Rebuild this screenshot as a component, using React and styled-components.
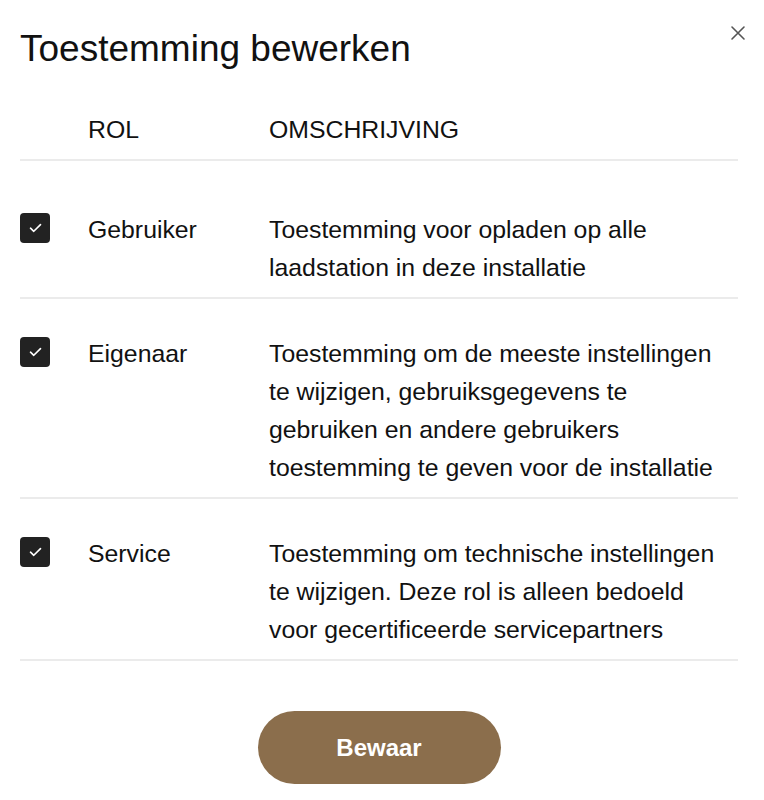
import React from 'react'
import styled, { createGlobalStyle } from 'styled-components'

const GlobalStyle = createGlobalStyle`
  body {
    margin: 0;
    background: #fff;
    font-family: "Liberation Sans", Arial, sans-serif;
    color: #111;
  }
`

const Dialog = styled.div`
  position: relative;
  padding: 27px 26px 0 20px;
`

const Title = styled.h2`
  margin: 0;
  font-size: 37px;
  line-height: 44px;
  font-weight: 400;
`

const CloseButton = styled.button`
  position: absolute;
  top: 24px;
  right: 17px;
  width: 18px;
  height: 18px;
  padding: 0;
  border: 0;
  background: none;
  cursor: pointer;
  svg {
    display: block;
  }
`

const Table = styled.div`
  margin-top: 40px;
`

const Row = styled.div`
  display: grid;
  grid-template-columns: 68px 181px 1fr;
  align-items: start;
  font-size: 24.8px;
  line-height: 38px;
  padding: ${(p) => (p.header ? '0 0 10px' : p.first ? '50px 0 10px' : '36px 0 10px')};
  border-bottom: 2px solid #ebebeb;
`

const Description = styled.span`
  max-width: 452px;
`

const Check = styled.span`
  width: 30px;
  height: 30px;
  margin-top: 2px;
  border-radius: 4px;
  background: #222;
  display: flex;
  align-items: center;
  justify-content: center;
`

const Footer = styled.div`
  display: flex;
  justify-content: center;
  padding-top: 50px;
`

const SaveButton = styled.button`
  width: 243px;
  height: 73px;
  border: 0;
  border-radius: 37px;
  background: #8b6e4c;
  color: #fff;
  font-family: "Liberation Sans", Arial, sans-serif;
  font-size: 24px;
  font-weight: 700;
  cursor: pointer;
`

const roles = [
  {
    name: 'Gebruiker',
    text: 'Toestemming voor opladen op alle laadstation in deze installatie',
  },
  {
    name: 'Eigenaar',
    text: 'Toestemming om de meeste instellingen te wijzigen, gebruiksgegevens te gebruiken en andere gebruikers toestemming te geven voor de installatie',
  },
  {
    name: 'Service',
    text: 'Toestemming om technische instellingen te wijzigen. Deze rol is alleen bedoeld voor gecertificeerde servicepartners',
  },
]

function CheckIcon() {
  return (
    <svg width="13" height="10" viewBox="0 0 13 10" fill="none">
      <path d="M1.5 5.2 L4.8 8.3 L11.5 1.6" stroke="#fff" strokeWidth="1.6" strokeLinecap="round" strokeLinejoin="round" />
    </svg>
  )
}

export default function App() {
  return (
    <>
      <GlobalStyle />
      <Dialog>
        <Title>Toestemming bewerken</Title>
        <CloseButton aria-label="Sluiten">
          <svg width="18" height="18" viewBox="0 0 18 18">
            <path d="M3 3 L15 15 M15 3 L3 15" stroke="#555" strokeWidth="1.6" strokeLinecap="round" />
          </svg>
        </CloseButton>
        <Table>
          <Row header>
            <span />
            <span>ROL</span>
            <span>OMSCHRIJVING</span>
          </Row>
          {roles.map((r, i) => (
            <Row key={r.name} first={i === 0}>
              <Check><CheckIcon /></Check>
              <span>{r.name}</span>
              <Description>{r.text}</Description>
            </Row>
          ))}
        </Table>
        <Footer>
          <SaveButton>Bewaar</SaveButton>
        </Footer>
      </Dialog>
    </>
  )
}
